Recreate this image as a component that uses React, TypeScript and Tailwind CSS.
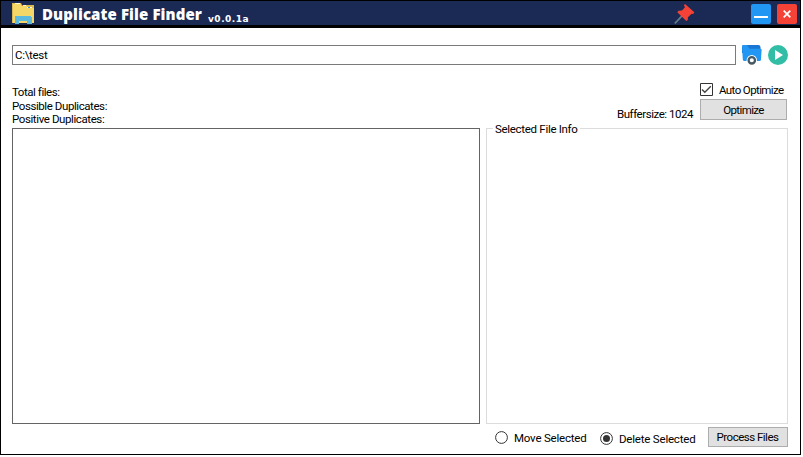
import React from "react";

function FolderIcon() {
  return (
    <svg width="24" height="24" viewBox="0 0 24 24">
      <path d="M1 2h9l1 2h12v18H1z" fill="#dcb850" />
      <path d="M4 2h5v1H4zM11 4h4v1h-4zM16 6h5v1h-5z" fill="#fdf6d8" />
      <path d="M2 3h8v2h6v2h7v15H2z" fill="#f5d768" />
      <path d="M12 4h3v1h-3zM16 6h5v1h-5z" fill="#fdf6d8" />
      <path d="M11 4h1v1h-1z" fill="#d3652f" />
      <path d="M17 6h2v1h-2z" fill="#3f9bdc" />
      <path d="M4 15h16v1h1v7h-5v-3H8v3H4z" fill="#5db9dd" />
    </svg>
  );
}

function PinIcon() {
  return (
    <svg width="22" height="22" viewBox="0 0 22 22">
      <path d="M8 12.800.8 20.500" stroke="#647b88" strokeWidth="1.800" />
      <path d="M11 1 20.300 9.200 19.200 10.900 17.600 10.700 13.900 14.200 13.700 17 12.300 18 3.300 9.300 4.600 7.700 8 7.600 11 4.300 9.900 2.300z" fill="#f44336" />
    </svg>
  );
}

function BrowseIcon() {
  return (
    <svg width="20" height="20" viewBox="0 0 20 20">
      <path d="M1.500 0H16.500q1.700 0 2 2V8H0V1.500Q0 0 1.500 0z" fill="#1976d2" />
      <path d="M1.500 0H5l2.500 3.700h11q1.200 0 1.100 1.300L19 14.500q-.2 1.500-1.500 1.500H2.500Q1 16 .8 14.500L0 2Q0 0 1.500 0z" fill="#2196f3" />
      <circle cx="9.800" cy="15.300" r="5.200" fill="#fff" />
      <circle cx="9.800" cy="15.300" r="3.200" fill="#fff" stroke="#455a64" strokeWidth="2.300" />
    </svg>
  );
}

function StartIcon() {
  return (
    <svg width="20" height="20" viewBox="0 0 20 20">
      <circle cx="10" cy="10" r="10" fill="#32bea6" />
      <path d="M7 5v10l8-5z" fill="#fff" />
    </svg>
  );
}

function Radio({ checked = false }: { checked?: boolean }) {
  return (
    <svg className="shrink-0" width="13" height="13" viewBox="0 0 13 13">
      <circle cx="6.500" cy="6.500" r="5.900" fill="#fff" stroke="#333" strokeWidth="1" />
      {checked && <circle cx="6.500" cy="6.500" r="3.500" fill="#333" />}
    </svg>
  );
}

export default function App() {
  return (
    <div className="h-[457px] w-[803px] overflow-hidden bg-white font-['Roboto',sans-serif] text-[11.5px] leading-[14px] text-black">
      <div className="flex h-[455px] w-[801px] flex-col border border-black">
        <header className="flex h-[27px] shrink-0 border-b-[3px] border-black bg-[#1b2a55] pl-[10px] text-white">
          <FolderIcon />
          <h1 className="ml-[7px] mt-[4px] w-[166px] whitespace-nowrap font-['Open_Sans',sans-serif] text-[15px] font-extrabold leading-[19px] tracking-[0.1px]">Duplicate File Finder</h1>
          <span className="mt-[12px] whitespace-nowrap font-['DejaVu_Sans',sans-serif] text-[9px] font-bold leading-[12px] tracking-[0.5px]">v0.0.1a</span>
          <div className="ml-auto mr-[3px] flex">
            <div className="mr-[55px] mt-[2px]"><PinIcon /></div>
            <div className="mr-[6px] mt-[3px] flex h-[20px] w-[20px] items-end justify-center rounded-[2px] bg-[#2196f3] pb-[6px]">
              <div className="h-[2px] w-[14px] bg-white" />
            </div>
            <div className="mt-[3px] flex h-[20px] w-[20px] items-center justify-center rounded-[2px] bg-[#f44336]">
              <svg width="8" height="8" viewBox="0 0 8 8"><path d="M.7.7l6.600 6.600M7.300.7.700 7.300" stroke="#fff" strokeWidth="1.700" /></svg>
            </div>
          </div>
        </header>

        <main className="flex flex-1 flex-col pl-[11px] pt-[17px]">
          <div className="flex h-[20px]">
            <div className="h-[20px] w-[724px] border border-[#7a7a7a] pl-[2px] pt-[2px] tracking-[-0.3px]">C:\test</div>
            <div className="ml-[6px]"><BrowseIcon /></div>
            <div className="ml-[6px]"><StartIcon /></div>
          </div>

          <div className="flex h-[63px] w-[776px] justify-between">
            <div className="pt-[21px] leading-[13.500px]">
              <p className="tracking-[-0.45px]">Total files:</p>
              <p className="tracking-[-0.42px]">Possible Duplicates:</p>
              <p className="tracking-[-0.4px]">Positive Duplicates:</p>
            </div>
            <div className="flex">
              <span className="mt-[42px] w-[83px] whitespace-nowrap tracking-[-0.45px]">Buffersize: 1024</span>
              <div className="w-[88px] pt-[18px]">
                <label className="flex h-[13px] items-center">
                  <svg className="shrink-0" width="13" height="13" viewBox="0 0 13 13"><path d="M.5.5h12v12H.5z" fill="#fff" stroke="#333" /><path d="M2 6.500 4.800 9.200l6-6" fill="none" stroke="#444" strokeWidth="1.400" /></svg>
                  <span className="ml-[6px] whitespace-nowrap tracking-[-0.6px]">Auto Optimize</span>
                </label>
                <button className="mt-[3px] flex h-[21px] w-[87px] items-center justify-center border border-[#adadad] bg-[#e1e1e1] tracking-[-0.6px]">Optimize</button>
              </div>
            </div>
          </div>

          <div className="flex h-[296px]">
            <div className="w-[468px] border border-[#646464]" />
            <fieldset className="relative ml-[6px] w-[302px] border border-[#dcdcdc]">
              <span className="absolute left-[6px] top-[-7px] whitespace-nowrap bg-white px-[2px] tracking-[-0.3px]">Selected File Info</span>
            </fieldset>
          </div>

          <div className="flex pl-[483px] pt-[3px]">
            <label className="flex h-[20px] w-[105px] items-center">
              <Radio />
              <span className="ml-[6px] mt-px whitespace-nowrap tracking-[-0.2px]">Move Selected</span>
            </label>
            <label className="mt-[1px] flex h-[20px] w-[108px] items-center">
              <Radio checked />
              <span className="ml-[6px] mt-px whitespace-nowrap tracking-[-0.2px]">Delete Selected</span>
            </label>
            <button className="flex h-[20px] w-[80px] items-center justify-center border border-[#adadad] bg-[#e1e1e1] pr-px tracking-[-0.5px]">Process Files</button>
          </div>
        </main>
      </div>
    </div>
  );
}
